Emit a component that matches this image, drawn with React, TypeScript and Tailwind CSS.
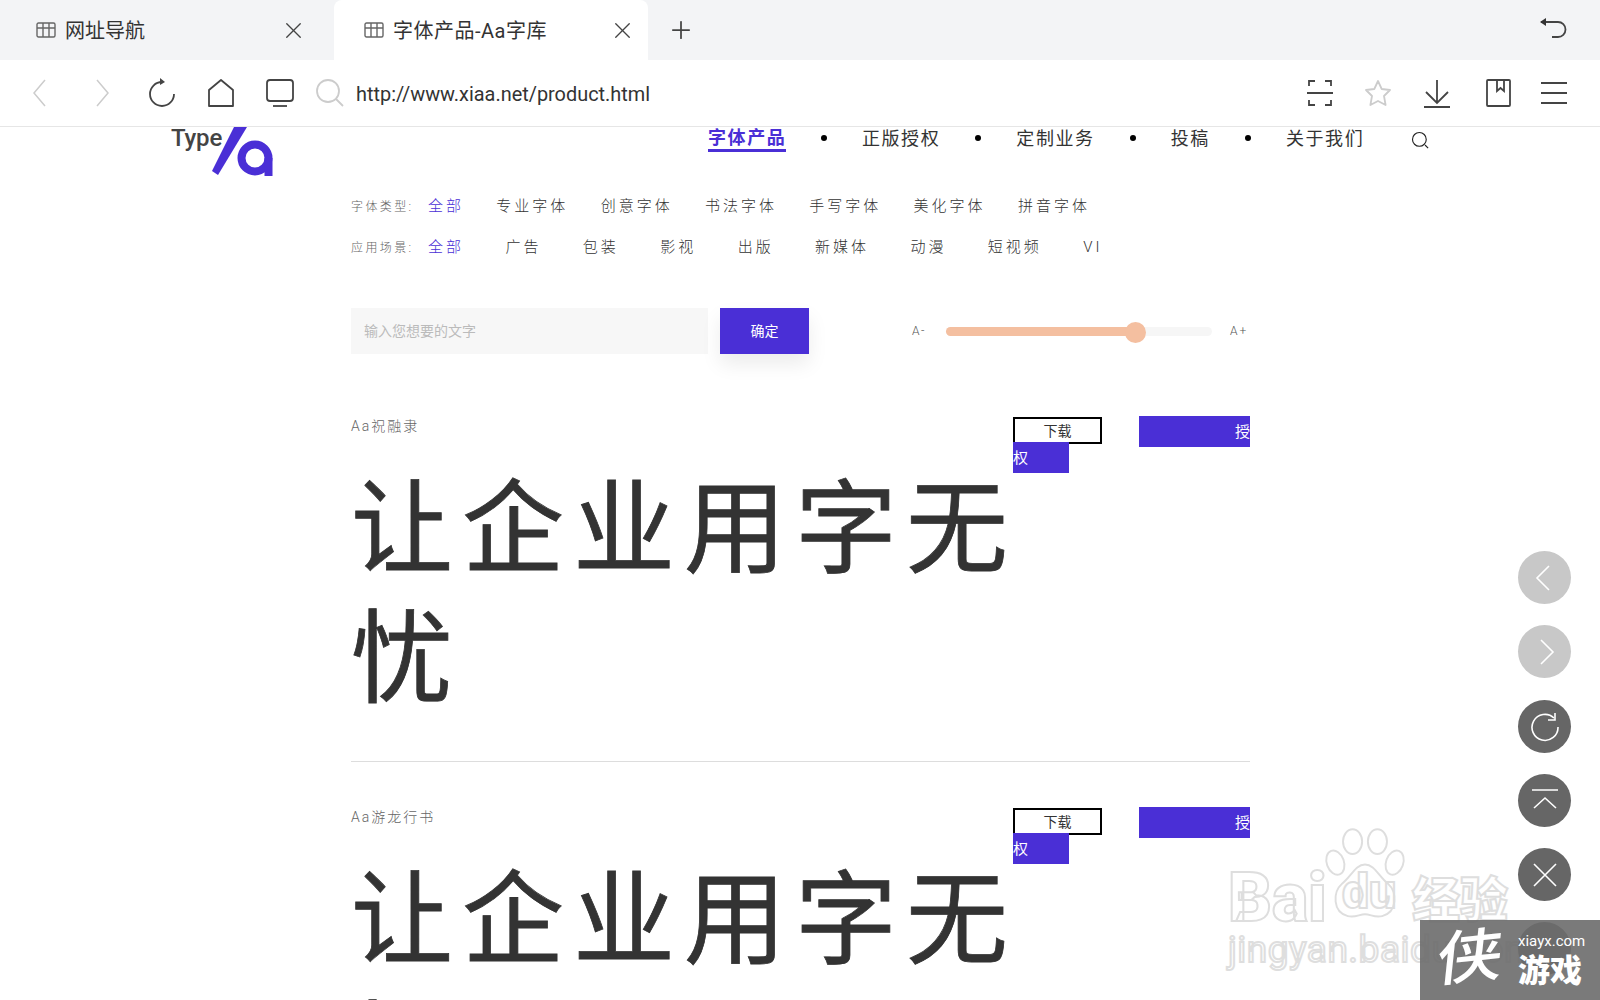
import { ReactNode } from "react";
import { X, Plus } from "lucide-react";

const font = { fontFamily: '"Roboto","Noto Sans CJK SC",sans-serif' };

// thin browser-chrome icons, all drawn on a 32 box
function Ico({ children, size = 32, color = "#444", sw = 1.8 }: { children: ReactNode; size?: number; color?: string; sw?: number }) {
  return (
    <svg width={size} height={size} viewBox="0 0 32 32" fill="none" stroke={color} strokeWidth={sw} className="shrink-0">
      {children}
    </svg>
  );
}

function GridIcon() {
  return (
    <svg width="20" height="16" viewBox="0 0 20 16" fill="none" stroke="#666" strokeWidth="1.4" className="shrink-0">
      <rect x="1" y="1" width="18" height="14" rx="1.5" />
      <path d="M1 6h18M7 1v14M13 1v14" />
    </svg>
  );
}

function Tab({ title, active, width }: { title: string; active?: boolean; width: string }) {
  return (
    <div className={`${width} ${active ? "bg-white rounded-t-lg pl-[30px] pr-[12px]" : "pl-[36px] pr-[27px]"} h-[60px] flex items-center`}>
      <GridIcon />
      <span className={`ml-[9px] pt-[2px] text-[20px] text-[#333] ${active ? "tracking-[0.5px]" : ""}`}>{title}</span>
      <X size={27} strokeWidth={1.2} color="#444" className="ml-auto" />
    </div>
  );
}

function BrowserChrome() {
  return (
    <>
      <div className="h-[60px] bg-[#f3f4f6] flex items-center shrink-0">
        <Tab title="网址导航" width="w-[334px]" />
        <Tab title="字体产品-Aa字库" active width="w-[314px]" />
        <Plus size={28} strokeWidth={1.5} color="#444" className="ml-[19px]" />
        <div className="ml-auto mr-[31px]">
          <Ico>
            <path d="M4 8h17a7.500 7.500 0 0 1 0 15h-6" />
            <path d="M9 4 3 8l6 4" fill="#333" stroke="none" />
          </Ico>
        </div>
      </div>
      <div className="h-[67px] border-b border-[#e6e6e6] bg-white flex items-center shrink-0 pl-[24px] pr-[30px]">
        <Ico color="#ccc" sw={1.5}><path d="M21 3 10 16l11 13" /></Ico>
        <div className="ml-[30px]"><Ico color="#ccc" sw={1.5}><path d="M11 3l11 13-11 13" /></Ico></div>
        <div className="ml-[28px]">
          <Ico>
            <path d="M16 5A12 12 0 1 0 28 17" />
            <path d="M14 1l5 4-5 3z" fill="#444" stroke="none" />
          </Ico>
        </div>
        <div className="ml-[27px]"><Ico><path d="M4 29V13L16 3l12 10v16z" strokeLinejoin="round" /></Ico></div>
        <div className="ml-[27px]">
          <Ico>
            <rect x="3" y="3" width="26" height="21" rx="3" />
            <path d="M9 29h14" />
          </Ico>
        </div>
        <div className="ml-[18px]">
          <Ico color="#ccc">
            <circle cx="14" cy="14" r="11" />
            <path d="M22 22l7 7" />
          </Ico>
        </div>
        <span className="ml-[10px] pt-[3px] text-[19.900px] text-[#333]">http://www.xiaa.net/product.html</span>
        <div className="ml-auto"><Ico>
          <path d="M5 9V4h6M21 4h6v5M5 23v5h6M27 23v5h-6M3 16h26" />
        </Ico></div>
        <div className="ml-[26px]"><Ico color="#ccc"><path d="m16 4 3.700 8 8.300 1-6 6 1.600 9L16 24l-7.600 4L10 19l-6-6 8.300-1z" strokeLinejoin="round" /></Ico></div>
        <div className="ml-[27px]"><Ico><path d="M16 3v22M5 15l11 11 11-11M3 30h26" /></Ico></div>
        <div className="ml-[29px]"><Ico>
          <rect x="5" y="3" width="23" height="26" rx="1" />
          <path d="M15 3v11l3.500-3 3.500 3V3" />
        </Ico></div>
        <div className="ml-[24px]"><Ico><path d="M3 6h26M3 16h26M3 26h26" /></Ico></div>
      </div>
    </>
  );
}

function Logo() {
  return (
    <div className="w-[104px] h-[49px] relative shrink-0">
      <span className="absolute left-[1px] top-[-7px] text-[24px] font-medium text-[#444] tracking-[-0.2px]">Type</span>
      <svg width="104" height="49" viewBox="0 0 104 49" className="absolute left-0 top-0">
        <path d="M64 0h13L48 48l-6-4z" fill="#4a2fd6" />
        <circle cx="85" cy="31" r="13.500" fill="none" stroke="#4a2fd6" strokeWidth="8" />
        <rect x="94.500" y="31" width="8" height="18" fill="#4a2fd6" />
      </svg>
    </div>
  );
}

const Dot = () => <span className="block w-[6px] h-[6px] rounded-full bg-black" />;

function TopNav() {
  return (
    <div className="h-[49px] flex items-start pl-[170px]">
      <Logo />
      <div className="ml-[434px] flex items-center h-[22px] text-[18px] tracking-[1.600px] text-[#333]">
        <span className="font-bold text-[#4a2fd6] border-b-[3px] border-[#4a2fd6] leading-[22px] mt-[2px]">字体产品</span>
        <span className="ml-[35px]"><Dot /></span>
        <span className="ml-[34.500px]">正版授权</span>
        <span className="ml-[35px]"><Dot /></span>
        <span className="ml-[35px]">定制业务</span>
        <span className="ml-[35px]"><Dot /></span>
        <span className="ml-[35px]">投稿</span>
        <span className="ml-[35px]"><Dot /></span>
        <span className="ml-[35px]">关于我们</span>
        <div className="ml-[46px] mt-[4px]">
          <Ico size={20} color="#222" sw={1.8}>
            <circle cx="15" cy="15" r="11" />
            <path d="M24 24l5 5" />
          </Ico>
        </div>
      </div>
    </div>
  );
}

function FilterRow({ label, items, gap }: { label: string; items: string[]; gap: string }) {
  return (
    <div className="h-[41px] flex items-center text-[15px] tracking-[3px] text-[#333] font-light">
      <span className="w-[77px] text-[12px] tracking-[2.400px] text-[#666]">{label}:</span>
      <div className={`flex items-center ${gap}`}>
        <span className="text-[#4a2fd6]">全部</span>
        {items.map((item) => (
          <span key={item}>{item}</span>
        ))}
      </div>
    </div>
  );
}

function FontItem({ name, last }: { name: string; last?: boolean }) {
  return (
    <div className={last ? "" : "border-b border-[#ddd] h-[346px] mb-[45px]"}>
      <div className="flex">
        <div className="w-[662px] shrink-0">
          <div className="h-[48px] text-[14px] tracking-[2px] text-[#666] font-light">{name}</div>
          <div className="-mr-[14px] text-[102px] leading-[130px] tracking-[9px] pt-[1px] text-[#333] [-webkit-text-stroke:0.8px_#333]">让企业用字无忧</div>
        </div>
        <div className="w-[237px] pt-[2.500px] text-[15px] leading-[26px]">
          <span className="inline-block w-[89px] h-[27px] border-2 border-black text-center text-[14px] leading-[25px] text-[#333] align-top -mt-[1.500px]">下载</span>
          <span className="ml-[37px] bg-[#4a2fd6] text-white py-[6.500px] pl-[96px] pr-[41px] [word-break:break-all]">授权</span>
        </div>
      </div>
    </div>
  );
}

function SideBtn({ dark, children }: { dark?: boolean; children?: ReactNode }) {
  return (
    <div className={`w-[53px] h-[53px] rounded-full flex items-center justify-center ${dark ? "bg-[#666]" : "bg-[#c8c8c8]"}`}>
      <Ico color="#fff" sw={1.6}>{children}</Ico>
    </div>
  );
}

function SideButtons() {
  return (
    <div className="absolute left-[1518px] top-[424px] flex flex-col gap-[21.300px]">
      <SideBtn><path d="M20 4 8 16l12 12" /></SideBtn>
      <SideBtn><path d="M12 4l12 12-12 12" /></SideBtn>
      <SideBtn dark>
        <path d="M25 8a13 13 0 1 0 4 9" />
        <path d="M19 10h7V3" />
      </SideBtn>
      <SideBtn dark>
        <path d="M3 6h26M5 24l11-10 11 10" />
      </SideBtn>
      <SideBtn dark>
        <path d="M5 5l22 22M27 5 5 27" />
      </SideBtn>
      <SideBtn dark />
    </div>
  );
}

// faint baidu stamp across the lower right
function BaiduMark() {
  const outline = "absolute text-transparent font-black [-webkit-text-stroke:2px_#dedede]";
  return (
    <div className="absolute left-[1228px] top-[702px] w-[310px] h-[140px] pointer-events-none">
      <span className={`${outline} left-0 top-[33px] text-[68px] leading-[72px]`}>Bai</span>
      <svg width="86" height="98" viewBox="0 0 90 100" fill="none" stroke="#dedede" strokeWidth="2" className="absolute left-[94px] top-[-2px]">
        <ellipse cx="32" cy="14" rx="10" ry="13" />
        <ellipse cx="58" cy="14" rx="10" ry="13" />
        <ellipse cx="14" cy="36" rx="9" ry="13" transform="rotate(-20 14 36)" />
        <ellipse cx="76" cy="36" rx="9" ry="13" transform="rotate(20 76 36)" />
        <path d="M45 38c-10 0-14 12-24 20-10 9-10 30 6 34 8 2 12-2 18-2s10 4 18 2c16-4 16-25 6-34-10-8-14-20-24-20z" />
      </svg>
      <span className={`${outline} left-[114px] top-[38px] text-[48px] leading-[50px]`}>du</span>
      <span className={`${outline} left-[184px] top-[44px] text-[48px] leading-[56px]`}>经验</span>
      <span className={`${outline} left-0 top-[99px] text-[37px] leading-[44px] tracking-[0.5px] font-normal [-webkit-text-stroke-width:1.200px]`}>jingyan.baidu.com</span>
    </div>
  );
}

function XiaMark() {
  return (
    <div className="absolute left-[1420px] top-[793px] w-[180px] h-[80px] bg-[#6b6b6b]/90 text-white">
      <span className="absolute left-[17px] top-[-2px] text-[66px] leading-[80px] font-medium [transform:rotate(-6deg)_skewX(-12deg)_scaleY(0.88)]">侠</span>
      <span className="absolute left-[98px] top-[11px] text-[15px] leading-[20px]">xiayx.com</span>
      <span className="absolute left-[98px] top-[31px] text-[32px] leading-[40px] font-black">游戏</span>
    </div>
  );
}

export default function App() {
  return (
    <div style={font} className="w-[1600px] h-[1000px] bg-white overflow-hidden flex flex-col">
      <BrowserChrome />
      <div className="relative flex-1 overflow-hidden">
        <TopNav />
        <div className="ml-[351px] w-[899px] mt-[10px]">
          <FilterRow label="字体类型" gap="gap-[32.300px]" items={["专业字体", "创意字体", "书法字体", "手写字体", "美化字体", "拼音字体"]} />
          <FilterRow label="应用场景" gap="gap-[41.400px]" items={["广告", "包装", "影视", "出版", "新媒体", "动漫", "短视频", "VI"]} />
          <div className="mt-[40px] h-[46px] flex items-center">
            <div className="w-[357px] h-[46px] bg-[#f7f7f7] flex items-center pl-[13px] text-[14px] text-[#bbb]">输入您想要的文字</div>
            <div className="ml-[12px] w-[89px] h-[46px] bg-[#4a2fd6] text-white text-[14px] flex items-center justify-center shadow-[0_10px_20px_rgba(0,0,0,0.08)]">确定</div>
            <span className="ml-[103px] text-[12px] text-[#555] tracking-[1.500px] font-light">A-</span>
            <div className="ml-[20px] w-[266px] h-[9px] rounded-full bg-[#f6f6f6] relative">
              <div className="w-[189px] h-[9px] rounded-full bg-[#f4bfa0]" />
              <div className="absolute left-[179px] top-[-5px] w-[21px] h-[21px] rounded-full bg-[#f4bfa0]" />
            </div>
            <span className="ml-[18px] text-[12px] text-[#555] tracking-[2px] font-light">A+</span>
          </div>
          <div className="mt-[62px]">
            <FontItem name="Aa祝融隶" />
            <FontItem name="Aa游龙行书" last />
          </div>
        </div>
        <BaiduMark />
        <SideButtons />
        <XiaMark />
      </div>
    </div>
  );
}
